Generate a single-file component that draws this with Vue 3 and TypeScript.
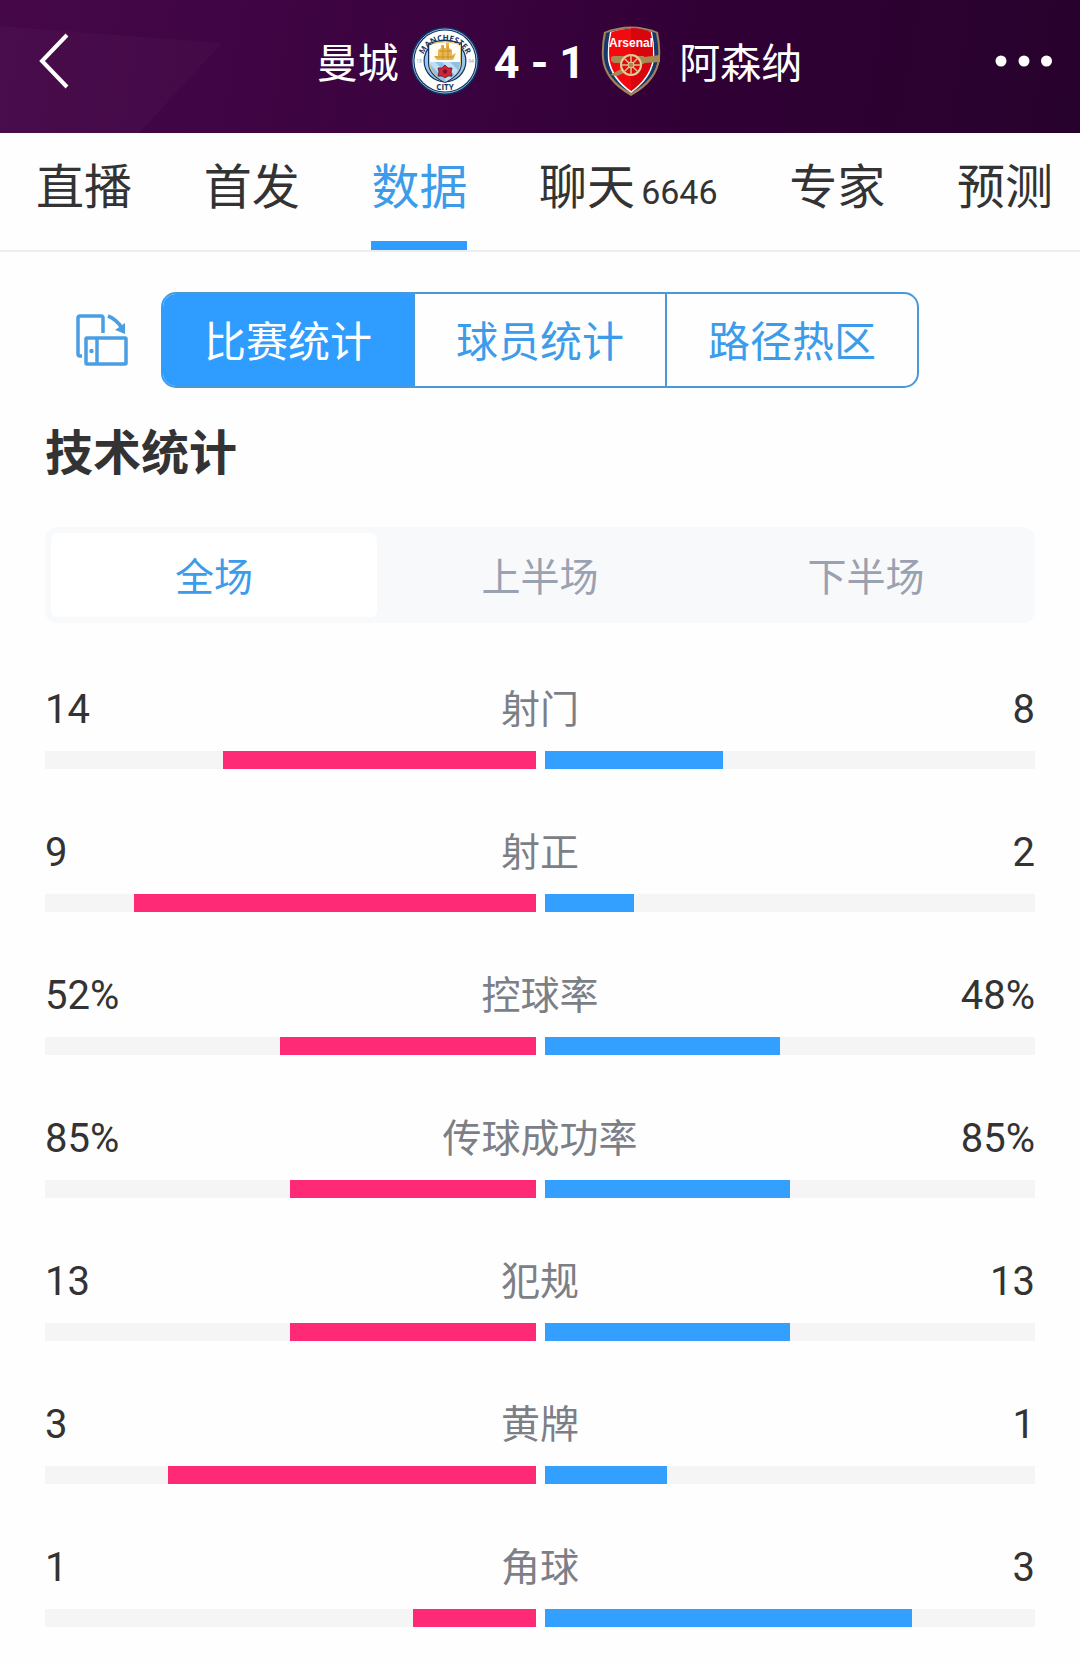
<script setup lang="ts">
import { ref } from 'vue'

interface Tab {
  label: string
  count?: number
}

interface Stat {
  label: string
  home: number
  away: number
  unit?: string
}

const tabs: Tab[] = [
  { label: '直播' },
  { label: '首发' },
  { label: '数据' },
  { label: '聊天', count: 6646 },
  { label: '专家' },
  { label: '预测' },
]
const views = ['比赛统计', '球员统计', '路径热区']
const periods = ['全场', '上半场', '下半场']

const activeTab = ref(2)
const activeView = ref(0)
const activePeriod = ref(0)

const stats: Stat[] = [
  { label: '射门', home: 14, away: 8 },
  { label: '射正', home: 9, away: 2 },
  { label: '控球率', home: 52, away: 48, unit: '%' },
  { label: '传球成功率', home: 85, away: 85, unit: '%' },
  { label: '犯规', home: 13, away: 13 },
  { label: '黄牌', home: 3, away: 1 },
  { label: '角球', home: 1, away: 3 },
]

const spokes = [0, 45, 90, 135]

function share(value: number, stat: Stat): string {
  return `${(value / (stat.home + stat.away)) * 100}%`
}
</script>

<template>
  <div class="page">
    <header class="top">
      <svg class="facet" viewBox="0 0 230 133" aria-hidden="true">
        <path d="M0 26 L222 43 L139 133 H0 Z" fill="#fff" fill-opacity="0.025" />
      </svg>
      <button class="icon-button" type="button" aria-label="返回">
        <svg width="32" height="56" viewBox="0 0 32 56">
          <path d="M29 2 L4 28 L29 54" fill="none" stroke="#fff" stroke-width="4" />
        </svg>
      </button>

      <h1 class="match">
        <span class="team">曼城</span>
        <svg class="crest" width="68" height="70" viewBox="0 0 68 70" aria-hidden="true">
          <defs>
            <path id="city-arc" d="M10.500 38 A23.500 23.500 0 1 1 57.500 38" />
            <clipPath id="city-shield">
              <path d="M19 19 Q34 14 49 19 V37 Q48 49 34 56 Q20 49 19 37 Z" />
            </clipPath>
          </defs>
          <circle cx="34" cy="35" r="34" fill="#12305f" />
          <circle cx="34" cy="35" r="32" fill="none" stroke="#8fb9dd" stroke-width="1" />
          <circle cx="34" cy="35" r="30.500" fill="#fff" />
          <circle cx="34" cy="35" r="21.500" fill="#15335f" />
          <circle cx="34" cy="35" r="20.300" fill="#98c5e9" />
          <path d="M17 17 Q34 11 51 17 V38 Q50 50 34 57 Q18 50 17 38 Z" fill="#15335f" />
          <path d="M18 18 Q34 12 50 18 V38 Q49 49 34 56 Q19 49 18 38 Z" fill="#e3c984" />
          <g clip-path="url(#city-shield)">
            <path d="M17 12 H51 V36 H17 Z" fill="#fffdf5" />
            <path d="M17 36 H51 V58 H17 Z" fill="#8fc0e8" />
            <path d="M17 36 H24 L46 58 H38 Z M31 36 H39 L52 49 V57 Z" fill="#c3def3" />
          </g>
          <path d="M23 30 H27 V24 L30 22 V19 H33 V22 H35 V17 H38 V22 L41 24 V29 L45 27 L42 34 H26 Z" fill="#e8b64c" />
          <path d="M24 31 H43 M29 25 H40 M32 20 V33 M37 20 V33" stroke="#b88425" stroke-width="0.700" />
          <path d="M34 39 L37 42 L41 42 L40 46 L41 50 L37 50 L34 52 L31 50 L27 50 L28 46 L27 42 L31 42 Z" fill="#cf2638" stroke="#5a1430" stroke-width="0.800" />
          <circle cx="34" cy="45.500" r="2.200" fill="#7f1028" />
          <text class="city-text" text-anchor="middle">
            <textPath href="#city-arc" startOffset="50%">MANCHESTER</textPath>
          </text>
          <text class="city-text" x="34" y="64" text-anchor="middle">CITY</text>
          <text class="city-year" x="8" y="37" text-anchor="middle">18</text>
          <text class="city-year" x="60" y="37" text-anchor="middle">94</text>
        </svg>
        <span class="score"><span>4</span><span>-</span><span>1</span></span>
        <svg class="crest" width="60" height="70" viewBox="0 0 60 70" aria-hidden="true">
          <path d="M3 6 Q30 -5 57 6 Q60 20 59 32 Q57 55 30 70 Q3 55 1 32 Q0 20 3 6 Z" fill="#a4805b" />
          <path d="M5 7 Q30 -2 55 7 Q58 20 57 32 Q55 53 30 67 Q5 53 3 32 Q2 20 5 7 Z" fill="#15376c" />
          <path d="M9 6 Q30 -1 51 6 Q54 20 53 34 Q50 53 30 67 Q10 53 7 34 Q6 20 9 6 Z" fill="#fff" />
          <path d="M10.500 6 Q30 -1 49.500 6 Q53 20 51.500 34 Q48 52 30 65 Q12 52 8.500 34 Q7 20 10.500 6 Z" fill="#f20a10" />
          <path d="M30 2 Q40 2 49.500 6 Q53 20 51.500 34 Q48 52 30 65 Z" fill="#d9050c" />
          <path d="M10 31 L13 30 H43 V31 L59 29 V36 L44 37 L34 42 L16 50 L9 49 L20 43 L24 37 H13 L10 35 Z" fill="#a68a52" />
          <circle cx="30" cy="39" r="10" fill="#dc0b12" stroke="#e4cf99" stroke-width="2" />
          <path
            v-for="angle in spokes"
            :key="angle"
            d="M20 39 H40"
            stroke="#d9bf84"
            stroke-width="1.500"
            :transform="`rotate(${angle} 30 39)`"
          />
          <circle cx="30" cy="39" r="3" fill="#a68a52" stroke="#e4cf99" />
          <text class="arsenal-text" x="30" y="21" text-anchor="middle">Arsenal</text>
        </svg>
        <span class="team away">阿森纳</span>
      </h1>

      <button class="icon-button" type="button" aria-label="更多">
        <svg width="58" height="12" viewBox="0 0 58 12" fill="#fff">
          <circle cx="6" cy="6" r="5.500" />
          <circle cx="29" cy="6" r="5.500" />
          <circle cx="51.500" cy="6" r="5.500" />
        </svg>
      </button>
    </header>

    <nav class="tabs">
      <a
        v-for="(tab, i) in tabs"
        :key="tab.label"
        href="#"
        class="tab"
        :class="{ active: i === activeTab }"
        @click.prevent="activeTab = i"
      >{{ tab.label }}<span v-if="tab.count" class="count">{{ tab.count }}</span></a>
    </nav>

    <main>
      <div class="toolbar">
        <button class="icon-button" type="button" aria-label="横屏">
          <svg width="52" height="52" viewBox="0 0 52 52" fill="none" stroke="#4a9fe3" stroke-width="3.500">
            <path d="M6 42 H4 Q2 42 2 40 V4 Q2 2 4 2 H25 Q27 2 27 4 V19" />
            <rect x="10" y="24" width="40" height="26" rx="1" />
            <path d="M21 24 V50" />
            <circle cx="15.500" cy="37" r="2.200" fill="#4a9fe3" stroke="none" />
            <path d="M32 2 Q40 5 46 14" />
            <path d="M49 9 V20 L39 16 Z" fill="#4a9fe3" stroke="none" />
          </svg>
        </button>
        <div class="views">
          <button
            v-for="(view, i) in views"
            :key="view"
            type="button"
            class="view"
            :class="{ active: i === activeView }"
            @click="activeView = i"
          >{{ view }}</button>
        </div>
      </div>

      <section class="stats">
        <h2>技术统计</h2>
        <div class="periods">
          <button
            v-for="(period, i) in periods"
            :key="period"
            type="button"
            class="period"
            :class="{ active: i === activePeriod }"
            @click="activePeriod = i"
          >{{ period }}</button>
        </div>

        <ul class="rows">
          <li v-for="stat in stats" :key="stat.label">
            <div class="values">
              <span class="value">{{ stat.home }}{{ stat.unit }}</span>
              <span class="label">{{ stat.label }}</span>
              <span class="value right">{{ stat.away }}{{ stat.unit }}</span>
            </div>
            <div class="bars">
              <div class="track home"><div class="fill" :style="{ width: share(stat.home, stat) }"></div></div>
              <div class="track away"><div class="fill" :style="{ width: share(stat.away, stat) }"></div></div>
            </div>
          </li>
        </ul>
      </section>
    </main>
  </div>
</template>

<style>
body {
  margin: 0;
  background: #fefefe;
}
</style>

<style scoped>
.page {
  font-family: Roboto, "Noto Sans CJK SC", sans-serif;
  color: #333;
  padding-bottom: 38px;
}

button {
  font: inherit;
  color: inherit;
  border: 0;
  padding: 0;
  background: none;
  cursor: pointer;
}

.icon-button {
  display: flex;
}

.top {
  position: relative;
  display: grid;
  grid-template-columns: 1fr auto 1fr;
  align-items: center;
  height: 133px;
  padding: 0 27px 12px 38px;
  box-sizing: border-box;
  color: #fff;
  background: linear-gradient(100deg, #450748 0%, #3b0340 40%, #300035 65%, #27022c 100%);
}

.top .icon-button {
  position: relative;
}

.top .icon-button:last-child {
  justify-self: end;
}

.facet {
  position: absolute;
  left: 0;
  top: 0;
  height: 100%;
}

.match {
  display: flex;
  align-items: center;
  margin: 0;
  padding-left: 28px;
  font-size: 41px;
  font-weight: 400;
  line-height: 48px;
}

.team {
  padding-top: 6px;
}

.team.away {
  margin-left: 18px;
}

.crest {
  flex: none;
}

.match .team + .crest {
  margin-left: 12px;
}

.score {
  display: flex;
  gap: 11px;
  margin: 5px 16px 0 15px;
  font-size: 45px;
  font-weight: 700;
}

.city-text {
  font: 700 8px "Open Sans", sans-serif;
  fill: #15335f;
}

.city-year {
  font: 400 5px "Open Sans", sans-serif;
  fill: #7fa8cc;
}

.arsenal-text {
  font: 700 12px "Liberation Sans", sans-serif;
  fill: #fff;
}

.tabs {
  display: flex;
  justify-content: space-between;
  height: 117px;
  padding: 0 27px 0 36px;
  border-bottom: 2px solid #eee;
}

.tab {
  display: flex;
  align-items: baseline;
  box-sizing: border-box;
  padding-top: 25px;
  border-bottom: 9px solid transparent;
  color: #333;
  font-size: 48px;
  line-height: 60px;
  text-decoration: none;
}

.tab.active {
  color: #3d9cea;
  border-color: #2f9dff;
}

.count {
  margin-left: 6px;
  font-size: 34px;
}

.toolbar {
  display: flex;
  align-items: center;
  gap: 33px;
  padding: 40px 161px 0 76px;
}

.views {
  flex: 1;
  display: flex;
  height: 96px;
  box-sizing: border-box;
  border: 2px solid #4a98d8;
  border-radius: 15px;
  overflow: hidden;
}

.view {
  flex: 1;
  padding-bottom: 3px;
  font-size: 42px;
  color: #3d9cea;
}

.view + .view {
  border-left: 2px solid #4a98d8;
}

.view.active {
  color: #fff;
  background: #2f9dff;
}

.views:has(.view.active:first-child) {
  border-left-color: #2f9dff;
}

.stats {
  padding: 0 45px;
}

h2 {
  margin: 34px 0 41px;
  font-size: 48px;
  font-weight: 700;
  line-height: 64px;
}

.periods {
  display: flex;
  height: 96px;
  padding: 6px;
  box-sizing: border-box;
  border-radius: 12px;
  background: #f8f9fb;
}

.period {
  flex: 1;
  padding-bottom: 3px;
  border-radius: 6px;
  font-size: 39px;
  color: #9aa1b0;
}

.period.active {
  color: #3d9cea;
  background: #fff;
}

.rows {
  display: flex;
  flex-direction: column;
  gap: 60px;
  margin: 63px 0 0;
  padding: 0;
  list-style: none;
}

.values {
  display: grid;
  grid-template-columns: 1fr auto 1fr;
  align-items: center;
  line-height: 48px;
}

.value {
  font-size: 40px;
}

.value.right {
  text-align: right;
}

.label {
  font-size: 39px;
  color: #7d7f87;
}

.bars {
  display: flex;
  gap: 9px;
  margin-top: 17px;
}

.track {
  flex: 1;
  display: flex;
  height: 18px;
  background: #f5f5f5;
}

.track.home {
  justify-content: flex-end;
}

.home .fill {
  background: #ff2a75;
}

.track.away .fill {
  background: #33a0ff;
}
</style>
